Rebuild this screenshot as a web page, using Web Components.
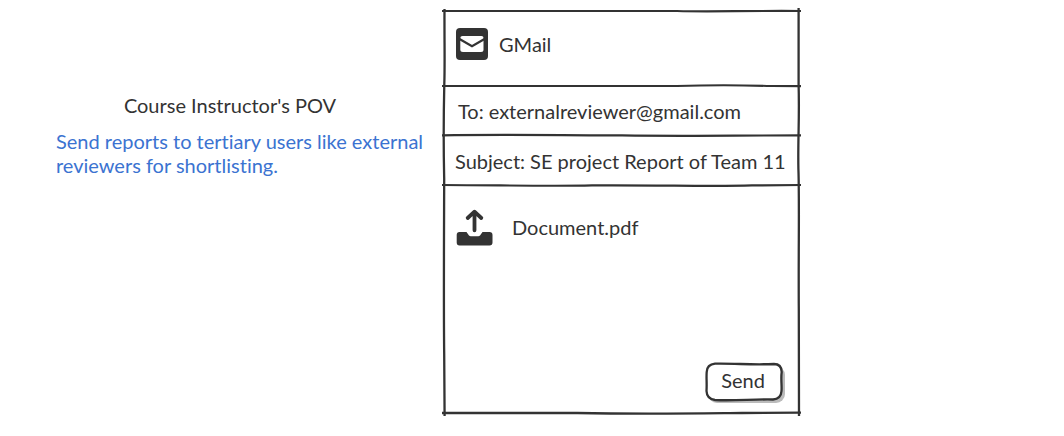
<!DOCTYPE html>
<html lang="en">
<head>
<meta charset="utf-8">
<title>Course Instructor's POV</title>
<style>
  body { margin: 0; background: #fff; color: #333; font: 20px/24px Lato, "Noto Sans", sans-serif; font-variant-ligatures: none; }
</style>
</head>
<body>
<pov-board>
  <pov-note slot="note">
    <span slot="title">Course Instructor's POV</span>
    Send reports to tertiary users like external reviewers for shortlisting.
  </pov-note>
  <mail-card>
    <mail-row class="brand"><app-icon name="mail"></app-icon><span>GMail</span></mail-row>
    <mail-row class="to"><mail-field label="To:" value="externalreviewer@gmail.com"></mail-field></mail-row>
    <mail-row class="subject"><mail-field label="Subject:" value="SE project Report of Team 11"></mail-field></mail-row>
    <mail-row class="content"><app-icon name="upload"></app-icon><span>Document.pdf</span></mail-row>
    <sketch-button slot="action">Send</sketch-button>
  </mail-card>
</pov-board>
<script>
const define = (name, html, setup) => customElements.define(name, class extends HTMLElement {
  connectedCallback() {
    if (this.shadowRoot) return;
    this.attachShadow({ mode: 'open' }).innerHTML = html;
    if (setup) setup(this, this.shadowRoot);
  }
});

define('pov-board', `
<style>
  :host { display: grid; grid-template-columns: 388fr 355fr 265fr; align-items: start; padding: 11px 0 22px 56px; }
</style>
<slot name="note"></slot><slot></slot>`);

define('pov-note', `
<style>
  :host { display: block; padding-top: 82px; }
  h1 { margin: 0 40px 12px 0; font: inherit; text-align: center; }
  p { margin: 0; color: #3b73d1; }
</style>
<h1><slot name="title"></slot></h1><p><slot></slot></p>`);

/* Hand-drawn frame: side strokes here, a top stroke on every row. */
define('mail-card', `
<style>
  :host { display: flex; flex-direction: column; position: relative; min-height: 402px; }
  svg { position: absolute; overflow: visible; fill: none; stroke: #333; stroke-width: 2.3; pointer-events: none; }
  path { vector-effect: non-scaling-stroke; }
  .left, .right { top: -2px; width: 6px; height: calc(100% + 5px); }
  .left { left: -3px; }
  .right { right: -3px; }
  .bottom { left: -2px; bottom: -3px; width: calc(100% + 4px); height: 6px; }
  .action { display: flex; justify-content: flex-end; margin-top: auto; padding: 0 17px 13px; }
</style>
<slot></slot>
<div class="action"><slot name="action"></slot></div>
<svg class="left" viewBox="0 0 6 407" preserveAspectRatio="none" aria-hidden="true"><path d="M3.5 0C3.3 30 4 55 3.3 75C2.5 110 2.5 140 3.2 170C3 230 2.6 300 3.2 345L3.6 407"/></svg>
<svg class="right" viewBox="0 0 6 407" preserveAspectRatio="none" aria-hidden="true"><path d="M2.6 -1V75C3.6 110 1.8 130 2.4 160C3.5 190 2.4 240 2.8 300L3 407"/></svg>
<svg class="bottom" viewBox="0 0 359 6" preserveAspectRatio="none" aria-hidden="true"><path d="M0 3H135C200 4.3 250 3.5 300 3L359 2.6"/></svg>`);

define('mail-row', `
<style>
  :host { display: flex; align-items: center; position: relative; box-sizing: border-box; }
  :host(.brand) { height: 75px; padding: 0 12px 10px; gap: 11px; }
  :host(.to) { height: 49px; padding: 0 14px; }
  :host(.subject) { height: 50px; padding: 2px 11px 0; }
  :host(.content) { height: 84px; padding: 0 12px; gap: 19px; }
  svg { position: absolute; left: -2px; top: -3px; width: calc(100% + 4px); height: 6px; overflow: visible;
    fill: none; stroke: #333; stroke-width: 2.2; pointer-events: none; }
  path { vector-effect: non-scaling-stroke; }
</style>
<slot></slot>
<svg viewBox="0 0 359 6" preserveAspectRatio="none" aria-hidden="true"><path/></svg>`,
(host, root) => {
  const strokes = {
    brand: 'M0 3H235C270 4 300 2.6 359 3',
    to: 'M0 3H235C260 2.2 310 2.4 330 3L359 3.2',
    subject: 'M0 3.4C60 2.3 120 3.4 180 3.4C240 4.4 290 3.4 359 3.4',
    content: 'M0 3C60 3.2 110 4.4 150 3.4C220 3 270 4.6 310 3.4L359 3'
  };
  root.querySelector('path').setAttribute('d', strokes[host.className]);
});

define('mail-field', `
<style>
  :host { display: flex; flex: 1; min-width: 0; gap: 5px; }
  input { flex: 1; min-width: 0; height: 26px; margin: 0; padding: 0; border: 0; outline: 0; background: none; color: inherit; font: inherit; font-variant-ligatures: none; }
  label { line-height: 26px; }
</style>
<label for="field"></label><input id="field" type="text">`,
(host, root) => {
  root.querySelector('label').textContent = host.getAttribute('label');
  root.querySelector('input').value = host.getAttribute('value');
});

define('app-icon', `
<style>
  :host { display: block; flex: none; }
  svg { display: block; fill: #333; }
</style>`,
(host, root) => {
  root.innerHTML += host.getAttribute('name') === 'mail'
    ? `<svg width="32" height="32" viewBox="0 0 32 32" aria-hidden="true"><rect width="32" height="32" rx="4"/>
       <path fill="#fff" d="M6.500 8H25.500Q27.500 8 27.500 10V21.500Q27.500 24 25 24H7Q4.300 24 4.300 21.500V10Q4.300 8 6.500 8Z"/>
       <path fill="none" stroke="#333" stroke-width="2.200" d="M3.500 11L16 18.300L28.500 11"/></svg>`
    : `<svg width="37" height="38" viewBox="0 0 37 38" aria-hidden="true">
       <path d="M3.500 24H10.500L13 27.500Q13.700 28.300 14.700 28.300H22.300Q23.300 28.300 24 27.500L26.500 24H33.500Q36.500 24 36.500 27V34.500Q36.500 37.500 33.500 37.500H3.500Q.7 37.500 .7 34.500V27Q.7 24 3.500 24Z"/>
       <path fill="none" stroke="#333" stroke-width="3.800" stroke-linecap="round" stroke-linejoin="round" d="M18.500 22.300V4M11.700 10L18.500 3.700L25.300 10"/></svg>`;
});

define('sketch-button', `
<style>
  :host { display: block; }
  button { position: relative; display: block; width: 76px; height: 37px; margin: 0; padding: 0 2px 4px 0; border: 0; background: none; color: inherit; font: inherit; cursor: pointer; }
  svg { position: absolute; left: 0; top: 0; overflow: visible; }
  span { position: relative; }
</style>
<button type="button"><svg width="76" height="37" viewBox="0 0 76 37" aria-hidden="true">
<rect x="2" y="3" width="77" height="37" rx="9" fill="#bbb"/>
<path fill="#fff" stroke="#333" stroke-width="2.300" d="M9 .7C30 .3 45 2 68 1Q75.500 1 75.700 9C74.700 16 76 22 75.500 28Q75 36 67 36.500C48 36 28 38 9 37Q.8 36 .5 28C1 20 .2 15 .7 9Q1 1.500 9 .7Z"/></svg><span><slot></slot></span></button>`);
</script>
</body>
</html>
